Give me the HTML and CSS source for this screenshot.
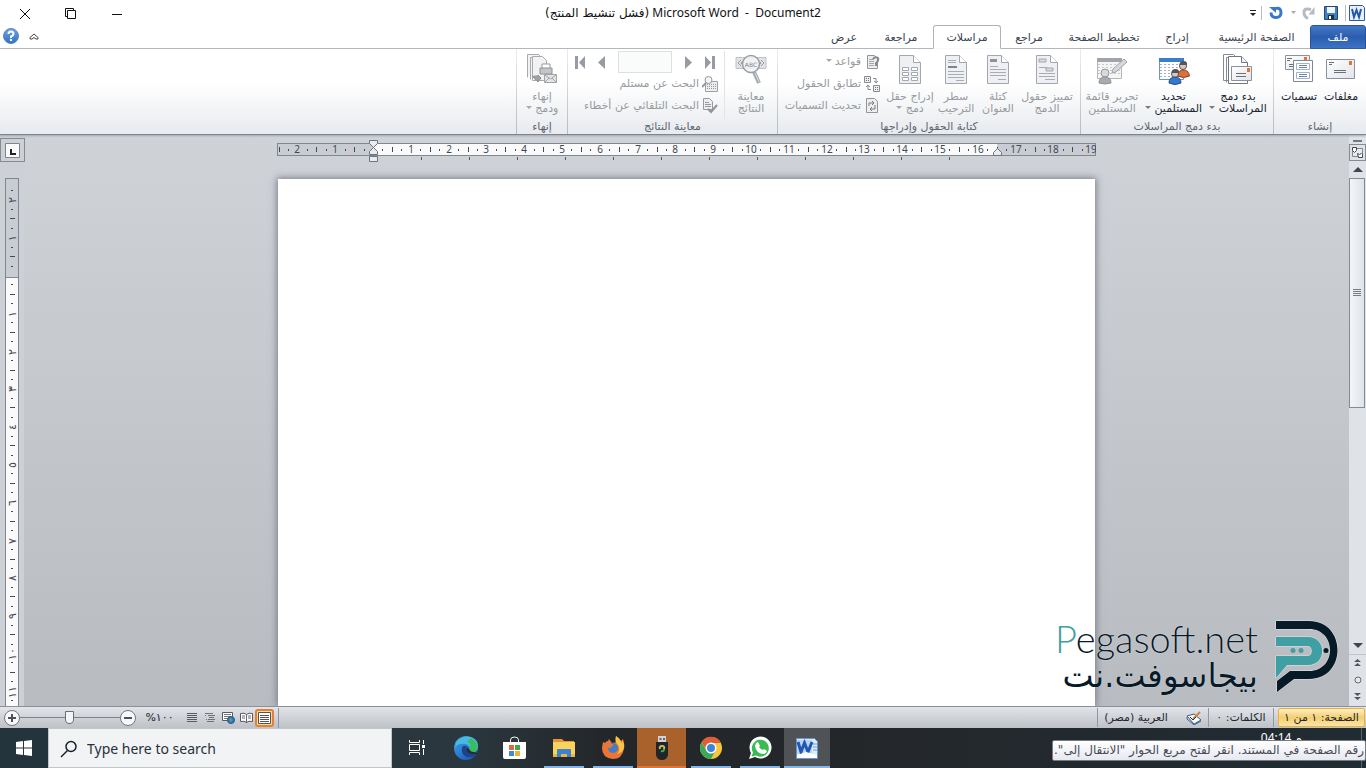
FILE: index.html
```html
<!DOCTYPE html>
<html lang="ar" dir="rtl">
<head>
<meta charset="utf-8">
<title>Microsoft Word - Document2</title>
<link rel="stylesheet" href="styles.css">
</head>
<body>
<svg class="defs" aria-hidden="true">
  <defs>
    <linearGradient id="paper" x1="0" y1="0" x2="1" y2="1"><stop offset="0" stop-color="#fff"/><stop offset="1" stop-color="#e2e4e9"/></linearGradient>
    <linearGradient id="edge" x1="0" y1="0" x2="1" y2="1"><stop offset="0" stop-color="#3aa5dc"/><stop offset=".5" stop-color="#2c7ad0"/><stop offset="1" stop-color="#1c479b"/></linearGradient>
    <linearGradient id="helpball" x1="0" y1="0" x2="0" y2="1"><stop offset="0" stop-color="#6aa6ea"/><stop offset="1" stop-color="#2c6fc4"/></linearGradient>
    <symbol id="doc" viewBox="0 0 24 32"><path d="M1.500 1.500h14l7 7v21h-21z" fill="#eff0f3" stroke="#a3a7ae"/><path d="M15.500 1.500v7h7" fill="#fff" stroke="#a3a7ae"/></symbol>
  </defs>
</svg>

<header class="titlebar" dir="ltr">
  <div class="window-buttons">
    <button aria-label="إغلاق"><svg width="12" height="12"><path d="M1 1l10 10M11 1L1 11" stroke="#111" fill="none"/></svg></button>
    <button aria-label="استعادة"><svg width="12" height="12"><path d="M.5 8.500v-8h8v2M2.500 2.500h8v8h-8zM.5 8.500h2" stroke="#111" fill="none"/></svg></button>
    <button aria-label="تصغير"><svg width="12" height="12"><path d="M1 6.500h10" stroke="#111"/></svg></button>
  </div>
  <h1 class="title"><bdi dir="rtl">(فشل تنشيط المنتج)</bdi> Microsoft Word&nbsp; -&nbsp; Document2</h1>
  <div class="quick-access">
    <button class="qa-more" aria-label="تخصيص"><svg width="8" height="8"><path d="M1 1.500h6" stroke="#222"/><path d="M1 4h6l-3 3z" fill="#222"/></svg></button>
    <button class="qa-undo" aria-label="تراجع"><svg width="14" height="14"><path d="M7 2.500q5-1 5 4 0 5-5 5-5 0-5-5" fill="none" stroke="#3778cc" stroke-width="3"/><path d="M0 1h7v6z" fill="#3778cc"/></svg></button>
    <button class="qa-drop" aria-label="خيارات"><svg width="6" height="4"><path d="M0 0h5l-2.500 3z" fill="#aaa"/></svg></button>
    <button class="qa-redo" aria-label="تكرار"><svg width="14" height="14"><path d="M9 3.500q-7-2-7 3 0 4 4 6" fill="none" stroke="#b6bac1" stroke-width="3"/><path d="M12.500 1v7.500h-6z" fill="#b6bac1"/></svg></button>
    <button class="qa-save" aria-label="حفظ"><svg width="14" height="14"><path d="M.5.5h13v13h-13z" fill="#3f7fc4" stroke="#24466f"/><path d="M3 1h8v6H3z" fill="#eef5fb"/><path d="M4 9h6v4.500H4z" fill="#1b2f49"/><path d="M5 10h2v3H5z" fill="#fff"/></svg></button>
    <span class="word-logo"><svg width="16" height="16"><path d="M.5.5h13l2 2v13H.5z" fill="#e8f0fb" stroke="#2c5aa8"/><path d="M3 4l2 8 2.500-7L10 12l2-8" fill="none" stroke="#2257b0" stroke-width="2"/></svg></span>
  </div>
</header>

<nav class="tabs">
  <button class="tab file">ملف</button>
  <button class="tab">الصفحة الرئيسية</button>
  <button class="tab">إدراج</button>
  <button class="tab">تخطيط الصفحة</button>
  <button class="tab">مراجع</button>
  <button class="tab active">مراسلات</button>
  <button class="tab">مراجعة</button>
  <button class="tab">عرض</button>
  <span class="tab-tools">
    <button aria-label="تصغير الشريط"><svg width="10" height="7"><path d="M1 4.500L5 1l4 3.500v1.500H7L5 4.500 3 6H1z" fill="#fff" stroke="#444"/></svg></button>
    <button aria-label="تعليمات"><svg width="16" height="16"><circle cx="8" cy="8" r="7.500" fill="url(#helpball)" stroke="#5f83b4"/><path d="M5.500 6q0-2.500 2.500-2.500T10.500 6Q10.500 7.500 8 8.500v1.500" fill="none" stroke="#fff" stroke-width="2"/><circle cx="8" cy="12" r="1.200" fill="#fff"/></svg></button>
  </span>
</nav>

<section class="ribbon" aria-label="مراسلات">
  <div class="group create">
    <div class="group-body">
      <button class="big"><svg width="32" height="32"><path d="M1.500 5.500h28v19h-28z" fill="url(#paper)" stroke="#8a919c"/><path d="M24 7h3v4h-3z" fill="#e1733a"/><path d="M4 8.500h5M4 10.500h3M9 16.500h12M9 18.500h12" stroke="#68707e"/></svg><span>مغلفات</span></button>
      <button class="big"><svg width="32" height="32"><path d="M2.500 1.500h24v14h-24z" fill="url(#paper)" stroke="#8a919c"/><path d="M21 3h3v4h-3z" fill="#e1733a"/><path d="M4 4.500h5M4 6.500h3M6 10.500h4M6 12.500h4" stroke="#68707e"/><path d="M10.500 6.500h19v21h-19z" fill="#fff" stroke="#7d8795"/><path d="M13.500 9.500h13v6h-13zM13.500 18.500h13v6h-13z" fill="#fff" stroke="#9fb2cf"/><path d="M16 11.500h8M16 13.500h8M16 20.500h8M16 22.500h8" stroke="#6f84a8"/></svg><span>تسميات</span></button>
    </div>
    <h2>إنشاء</h2>
  </div>
  <div class="group start">
    <div class="group-body">
      <button class="big"><svg width="32" height="32"><path d="M1.500 26.500v-26h10l3 3M1.500 26.500h6M4.500 28.500v-25h14" fill="#fff" stroke="#858b95"/><path d="M6.500 29.500v-27h13l6 6v21z" fill="#fff" stroke="#70777f"/><path d="M19.500 2.500v6h6" fill="#eef" stroke="#70777f"/><path d="M9.500 12.500h20v14h-20z" fill="url(#paper)" stroke="#8a919c"/><path d="M25 14h3v4h-3z" fill="#e1733a"/><path d="M14 19.500h10M14 22.500h10" stroke="#68707e"/></svg><span>بدء دمج<br>المراسلات <i class="arrow"></i></span></button>
      <button class="big"><svg width="32" height="32"><path d="M1.500 4.500h24v21h-24z" fill="#fff" stroke="#6c94cc"/><path d="M1 4h25v4H1z" fill="#3d7dcf"/><path d="M2 10.500h23M2 13.500h23M2 16.500h23M2 19.500h23M2 22.500h23" stroke="#a6b2c2" stroke-dasharray="2 2"/><circle cx="25" cy="12" r="3.500" fill="#d8c9bd" stroke="#555"/><path d="M21.500 11q0-4 4-4t3.500 4z" fill="#555"/><path d="M19.500 22q1-6 6-6t6 6q-6 3-12 0z" fill="#d9703f" stroke="#953c17"/><circle cx="17" cy="20" r="3.500" fill="#d8c9bd" stroke="#555"/><path d="M13.500 19q0-4 4-4t3.500 4z" fill="#555"/><path d="M11 29q0-6 6-6t6 6q-6 3-12 0z" fill="#3678ce" stroke="#204e92"/></svg><span>تحديد<br>المستلمين <i class="arrow"></i></span></button>
      <button class="big" disabled><svg width="32" height="32"><path d="M1.500 4.500h24v20h-24z" fill="#f5f5f6" stroke="#b4b6ba"/><path d="M1 4h25v4H1z" fill="#a1a4a9"/><path d="M2 10.500h23M2 13.500h23M2 16.500h23M2 19.500h23" stroke="#c6c8cc" stroke-dasharray="2 2"/><path d="M16 19l1-4L28 5l3 3-11 10z" fill="#d5d7da" stroke="#a0a3a8"/><circle cx="9" cy="19" r="4" fill="#d8d9db" stroke="#94979c"/><path d="M3 29q0-6 6-6t6 6q-6 2-12 0z" fill="#a8abb0" stroke="#8c8f94"/></svg><span>تحرير قائمة<br>المستلمين</span></button>
    </div>
    <h2>بدء دمج المراسلات</h2>
  </div>
  <div class="group fields">
    <div class="group-body">
      <button class="big" disabled><svg width="32" height="32"><use href="#doc" x="4" y="0" width="24" height="32"/><path d="M8 5h7v3H8z" fill="#d8dade" stroke="#a3a7ae"/><path d="M8 13.500h8M8 19.500h16M8 22.500h16M14 25.500h10" stroke="#a9acb2"/><path d="M15 14h7v3h-7z" fill="#d8dade" stroke="#a3a7ae"/></svg><span>تمييز حقول<br>الدمج</span></button>
      <button class="big" disabled><svg width="32" height="32"><use href="#doc" x="4" y="0" width="24" height="32"/><path d="M8 5h7v3H8z" fill="#8e9299"/><path d="M8 12.500h8M8 15.500h16M8 18.500h16M8 21.500h16M16 25.500h8" stroke="#a9acb2"/></svg><span>كتلة<br>العنوان</span></button>
      <button class="big" disabled><svg width="32" height="32"><use href="#doc" x="4" y="0" width="24" height="32"/><path d="M8 6.500h8M8 8.500h8M8 17.500h16M8 20.500h16M8 23.500h16M16 26.500h8" stroke="#a9acb2"/><path d="M8 12h9v2H8z" fill="#7f838a"/></svg><span>سطر<br>الترحيب</span></button>
      <button class="big" disabled><svg width="32" height="32"><use href="#doc" x="4" y="0" width="24" height="32"/><path d="M8.500 13.500h6v3h-6zM17.500 13.500h6v3h-6zM8.500 18.500h6v3h-6zM17.500 18.500h6v3h-6zM8.500 23.500h6v3h-6zM17.500 23.500h6v3h-6z" fill="#fff" stroke="#a3a7ae"/></svg><span>إدراج حقل<br>دمج <i class="arrow"></i></span></button>
      <div class="small-list">
        <button disabled><svg width="16" height="16"><path d="M3.500 1.500h7l3 3v10h-10z" fill="#eee" stroke="#92969c"/><path d="M5 5.500h5M5 7.500h5M5 9.500h5M5 11.500h5" stroke="#a3a7ad"/><path d="M9 5q2-3 5-1 1 3-2 5v3" fill="none" stroke="#868a90" stroke-width="2"/></svg>قواعد <i class="arrow"></i></button>
        <button disabled><svg width="16" height="16"><path d="M.5.5h6v6h-6zM9.500 9.500h6v6h-6z" fill="#eee" stroke="#888c92"/><path d="M2 2.500h3M2 4.500h3M11 11.500h3M11 13.500h3" stroke="#777" stroke-dasharray="1 1"/><path d="M9 2.500h3v4M10 5l2 2 2-2M7 13.500H4v-4M2 11l2-2 2 2" fill="none" stroke="#888c92"/></svg>تطابق الحقول</button>
        <button disabled><svg width="16" height="16"><path d="M2.500.5h8l3 3v11h-11z" fill="#eee" stroke="#92969c"/><path d="M5 8V5h5M8 3l2 2-2 2M11 7v4H6M8 9l-2 2 2 2" fill="none" stroke="#777c83"/></svg>تحديث التسميات</button>
      </div>
    </div>
    <h2>كتابة الحقول وإدراجها</h2>
  </div>
  <div class="group preview">
    <div class="group-body">
      <button class="big" disabled><svg width="32" height="32"><path d="M1 3.500h30v11H1z" fill="#e1e3e6" stroke="#bec1c5"/><path d="M6 6L3 9l3 3M9 6L6 9l3 3M26 6l3 3-3 3M23 6l3 3-3 3" fill="none" stroke="#999da3"/><circle cx="16" cy="10" r="8.500" fill="#f4f5f6" fill-opacity=".8" stroke="#9b9fa5" stroke-width="1.500"/><text x="16" y="13" class="abc">ABC</text><path d="M19 18l5 11" stroke="#a5a9af" stroke-width="4"/><path d="M20 19l4 9" stroke="#dcdee1"/></svg><span>معاينة<br>النتائج</span></button>
      <div class="preview-tools">
        <div class="record-nav">
          <button disabled aria-label="السجل الأخير"><svg width="10" height="13"><path d="M0 0l6 6.500L0 13zM7 0h3v13H7z" fill="#979ca4"/></svg></button>
          <button disabled aria-label="السجل التالي"><svg width="7" height="13"><path d="M0 0l7 6.500L0 13z" fill="#979ca4"/></svg></button>
          <input type="text" disabled aria-label="السجل">
          <button disabled aria-label="السجل السابق"><svg width="7" height="13"><path d="M7 0L0 6.500 7 13z" fill="#979ca4"/></svg></button>
          <button disabled aria-label="السجل الأول"><svg width="10" height="13"><path d="M10 0L4 6.500 10 13zM0 0h3v13H0z" fill="#979ca4"/></svg></button>
        </div>
        <div class="small-list">
          <button disabled><svg width="16" height="16"><path d="M3.500 5.500h12v10h-12z" fill="#eee" stroke="#a0a3a8"/><path d="M5 8.500h9M5 10.500h9M5 12.500h9" stroke="#96999e" stroke-dasharray="1 1"/><path d="M4 7L0 11" stroke="#96999e" stroke-width="2"/><circle cx="6.500" cy="4" r="3.500" fill="#f5f5f5" stroke="#96999e"/></svg>البحث عن مستلم</button>
          <button disabled><svg width="16" height="16"><path d="M1.500.5h6l3 3v8h-9z" fill="#eee" stroke="#96999e"/><path d="M3 4.500h4M3 6.500h6M3 8.500h6" stroke="#96999e"/><path d="M6 11l3 3 6-7" fill="none" stroke="#8f9298" stroke-width="2"/></svg>البحث التلقائي عن أخطاء</button>
        </div>
      </div>
    </div>
    <h2>معاينة النتائج</h2>
  </div>
  <div class="group finish">
    <div class="group-body">
      <button class="big" disabled><svg width="32" height="32"><path d="M1.500 23.500v-23h11l2 2M4.500 25.500v-22h13" fill="#f2f2f3" stroke="#a8abb0"/><path d="M6.500 26.500v-24h10l4 4v20z" fill="#f2f2f3" stroke="#a8abb0"/><path d="M16 10h8v5h-8z" fill="#fff" stroke="#96999e"/><path d="M14 14h12v6H14z" fill="#c3c5c9" stroke="#8f9298"/><path d="M6 22l6 6 3-4-3-3" fill="#9da0a5" stroke="#8c8f94"/><path d="M18.500 20.500h12v8h-12z" fill="#e4e5e7" stroke="#a0a3a8"/><path d="M19 21l5.500 4 5.500-4M19 28l4-4M30 28l-4-4" fill="none" stroke="#a0a3a8"/></svg><span>إنهاء<br>ودمج <i class="arrow"></i></span></button>
    </div>
    <h2>إنهاء</h2>
  </div>
</section>

<section class="workspace" dir="ltr">
  <aside class="left-rail">
    <button class="tab-stop" aria-label="علامة جدولة"><svg width="15" height="15"><path d="M.5.5h14v14H.5z" fill="#fafafa" stroke="#7d8590"/><path d="M6 6v5h5" fill="none" stroke="#222" stroke-width="2"/></svg></button>
    <svg class="v-ruler" id="v-ruler" width="14"></svg>
  </aside>
  <div class="canvas">
    <svg class="h-ruler" id="h-ruler" width="819" height="22"></svg>
    <main class="page" contenteditable="true" aria-label="المستند"></main>
  </div>
  <aside class="scrollbar">
    <span class="splitter"></span>
    <button class="ruler-toggle" aria-label="المسطرة"><svg width="13" height="13"><path d="M1.500 2.500h10v8h-10z" fill="#e9ecef" stroke="#7d8590"/><path d="M1.500 1.500h4v3l-2 2-2-2zM6.500 7.500l2 1 2-1 1 1v3h-4z" fill="#fff" stroke="#444"/></svg></button>
    <button class="step" aria-label="أعلى"><svg width="10" height="6"><path d="M5 0l5 5H0z" fill="#41454b"/></svg></button>
    <div class="track"><div class="thumb"><svg width="8" height="8"><path d="M0 .5h8M0 2.500h8M0 4.500h8M0 6.500h8" stroke="#777d85"/></svg></div></div>
    <button class="step" aria-label="أسفل"><svg width="10" height="6"><path d="M0 0h10L5 5z" fill="#41454b"/></svg></button>
    <div class="browse">
      <button aria-label="السابق"><svg width="7" height="8"><path d="M3.500 0L7 3H0zM3.500 4L7 7H0z" fill="#51565d"/></svg></button>
      <button aria-label="تحديد كائن الاستعراض"><svg width="8" height="8"><circle cx="4" cy="4" r="3" fill="#e6e8ea" stroke="#666b72"/></svg></button>
      <button aria-label="التالي"><svg width="7" height="8"><path d="M0 0h7L3.500 3zM0 4h7L3.500 7z" fill="#51565d"/></svg></button>
    </div>
  </aside>
  <div class="watermark">
    <div class="wm-text"><span class="wm-latin"><b>P</b>egasoft.net</span><span class="wm-arabic" dir="rtl">بيجاسوفت.نت</span></div>
    <svg width="64" height="74" viewBox="0 0 64 74"><g stroke="#fff" stroke-opacity=".6" paint-order="stroke"><path d="M1 1h33c38 0 38 58 0 58H19L2 72V61l13-10h19c28 0 28-42 0-42H1z" fill="#061a28"/><path d="M1 17h32c19 0 19 28 0 28H12L1 58V36h32c5 0 5-10 0-10H1z" fill="#3f9fa2"/></g><circle cx="18" cy="30.500" r="2.500" fill="#3f9fa2"/><circle cx="26" cy="30.500" r="2.500" fill="#3f9fa2"/><circle cx="51" cy="30.500" r="2.500" fill="#061a28"/></svg>
  </div>
</section>

<footer class="statusbar" dir="ltr">
  <div class="zoom">
    <button aria-label="تكبير"><svg width="16" height="16"><circle cx="8" cy="8" r="7.500" fill="#f8f8f8" stroke="#73777e"/><path d="M4 8h8M8 4v8" stroke="#4d5157" stroke-width="2"/></svg></button>
    <input type="range" min="0" max="100" value="49" aria-label="تكبير/تصغير">
    <button aria-label="تصغير"><svg width="16" height="16"><circle cx="8" cy="8" r="7.500" fill="#f8f8f8" stroke="#73777e"/><path d="M4 8h8" stroke="#4d5157" stroke-width="2"/></svg></button>
    <button class="zoom-value">%١٠٠</button>
  </div>
  <div class="views">
    <button aria-label="مسودة"><svg width="12" height="12"><path d="M1 1.500h10M1 3.500h10M1 5.500h10M1 7.500h10M1 9.500h10" stroke="#585d65"/></svg></button>
    <button aria-label="مخطط تفصيلي"><svg width="12" height="12"><path d="M1 1.500h8M4 3.500h7M5 5.500h5M4 7.500h7M3 9.500h7M1 3.500h1M2 7.500h1" stroke="#6d7279"/></svg></button>
    <button aria-label="تخطيط ويب"><svg width="13" height="12"><path d="M.5.500h10v8H.5z" fill="#fff" stroke="#555a61"/><path d="M2 2.500h7M2 4.500h7M2 6.500h4" stroke="#777"/><circle cx="9" cy="8" r="3.500" fill="#3678c0" stroke="#26557f"/><path d="M7 7l2-1 1 2-1 2z" fill="#62ac55"/></svg></button>
    <button aria-label="القراءة"><svg width="13" height="12"><path d="M.5 1.500q4-1 6 1 2-2 6-1v8q-4-1-6 1-2-2-6-1z" fill="#fff" stroke="#555a61"/><path d="M6.500 2v9M2 4h3M2 6h3M8 4h3M8 6h3" stroke="#666b72"/></svg></button>
    <button class="on" aria-label="تخطيط الطباعة"><svg width="13" height="12"><path d="M.5.5h12v11H.5z" fill="#fff" stroke="#4f545b"/><path d="M2 3.500h9M2 5.500h9M2 7.500h9M2 9.500h9" stroke="#555"/></svg></button>
  </div>
  <div class="status-info" dir="rtl">
    <button class="status-page">الصفحة: ١ من ١</button>
    <button class="status-words">الكلمات: ٠</button>
    <button class="status-lang"><svg width="16" height="14"><path d="M1 5l7-2 7 6-7 4z" fill="#f7f9fb" stroke="#3f5b83"/><path d="M1 6v2l7 6 7-4" fill="none" stroke="#3467a8"/><path d="M7 8l7-7" fill="none" stroke="#c9834b" stroke-width="2"/><path d="M4 6l3 3 3-3" fill="none" stroke="#333"/></svg>العربية (مصر)</button>
  </div>
</footer>

<footer class="taskbar" dir="ltr">
  <button class="start-button" aria-label="Start"><svg width="16" height="16"><path d="M0 2l7-1v6.500H0zM8 1l8-1v7.500H8zM0 8.500h7V15l-7-1zM8 8.500h8V16l-8-1z" fill="#fff"/></svg></button>
  <label class="search"><svg width="18" height="18"><circle cx="11" cy="6.500" r="5" fill="none" stroke="#16202a" stroke-width="1.500"/><path d="M7.500 10.500L1 17" stroke="#16202a" stroke-width="1.500"/></svg><input type="text" placeholder="Type here to search" aria-label="Type here to search"></label>
  <div class="apps">
    <button aria-label="Task View"><svg width="18" height="18"><path d="M1.500 1v2.500h10V1M1.500 16v-2.500h10V16M1.500 5.500h10v6h-10zM15.500 1v4M15.500 10v6" fill="none" stroke="#fff"/><path d="M14 6h3v3h-3z" fill="#fff"/></svg></button>
    <button aria-label="Edge"><svg width="24" height="24"><circle cx="12" cy="12" r="12" fill="url(#edge)"/><path d="M2 6C8-3 25-1 24 11c0 5-7 7-9 4 3-5-3-8-8-7-3 0-5 2-6 4z" fill="#49b9e3"/><path d="M17 2c8 4 9 14 2 14-3 0-5-1-4-3 3-3 1-6-2-7z" fill="#39bd61"/><path d="M9 10c-3 5 0 12 7 11 3 0 5-1 7-4-5 2-11 1-11-4 0-2 1-3 1-3z" fill="#1b438e"/><path d="M13 11c-2 3 0 7 5 7h6c-2-3-7-1-8-4z" fill="#242d33"/></svg></button>
    <button aria-label="Microsoft Store"><svg width="24" height="24"><path d="M0 6h23v15q0 2-2 2H2q-2 0-2-2z" fill="#fff"/><path d="M7.500 7V4q0-3 4-3t4 3v3" fill="none" stroke="#fff"/><path d="M6 9h5v5H6z" fill="#df6a36"/><path d="M12 9h5v5h-5z" fill="#42a556"/><path d="M6 15h5v5H6z" fill="#3f8ad5"/><path d="M12 15h5v5h-5z" fill="#e7b436"/></svg></button>
    <button class="running" aria-label="File Explorer"><svg width="24" height="24"><path d="M1 3h9l2 2h10v5H1z" fill="#e59735"/><path d="M1 6h22v15H1z" fill="#fbd35c"/><path d="M1 18h22v3H1z" fill="#efb742"/><path d="M5 21v-7q0-1 1-1h12q1 0 1 1v7h-4v-3H9v3z" fill="#3b83cf"/></svg></button>
    <button class="running" aria-label="Firefox"><svg width="24" height="24"><path d="M2 6l2 1q1-2 3-2l1-2 3 4 5-1-1-6q4 2 5 5l2-2q2 6 1 10-2 10-11 10Q1 22 1 12z" fill="#ec7434"/><path d="M15 0q-2 5 2 9 3 5-1 9 8-2 7-10l-2-4v3q-3-5-6-7z" fill="#f6c543"/><circle cx="12" cy="12" r="5" fill="#437cc7"/><path d="M5 8q4-2 8 1-3 1-3 3-3-1-5 1z" fill="#dc7a41"/></svg></button>
    <button class="running usb" aria-label="USB"><svg width="14" height="24"><path d="M3 0h8v7H3z" fill="#d1d3d6"/><path d="M4.500 2h2v2h-2zM8 2h2v2H8z" fill="#66696d"/><path d="M1 6h12v13q-1 5-6 5t-6-5z" fill="#20252a"/><path d="M5 13q-1-3 2-3 3 0 2 3" fill="none" stroke="#c9bd45" stroke-width="2"/><path d="M9 13q0 3-3 2" fill="none" stroke="#45a850" stroke-width="2"/></svg></button>
    <button class="running" aria-label="Chrome"><svg width="24" height="24"><circle cx="12" cy="12" r="11" fill="#f5c740"/><path d="M2.500 6.500A11 11 0 0 1 22 7H12L8 14z" fill="#df5d38"/><path d="M2.500 6.500A11 11 0 0 0 12 23l4-8H8z" fill="#3aa85a"/><circle cx="12" cy="12" r="5.500" fill="#fff"/><circle cx="12" cy="12" r="4" fill="#3f83da"/></svg></button>
    <button class="running" aria-label="WhatsApp"><svg width="24" height="24"><path d="M1 23l2-6A11 11 0 1 1 7 21z" fill="#fff"/><path d="M3.500 20.500l1.500-4a8.500 8.500 0 1 1 3 3z" fill="#3cbb54"/><path d="M8 7l2-1 2 4-1 1q1 2 4 3l1-1 3 2q-1 3-4 3-7-1-8-8z" fill="#fff"/></svg></button>
    <button class="running current" aria-label="Word"><svg width="24" height="24"><path d="M1.500 2.500h18l3 3v17h-21z" fill="#dcebfb" stroke="#6696ce"/><path d="M2 4h15v14H2z" fill="#b9d4f2"/><path d="M3 6l3 10L9.500 7l3.500 9 4-10" fill="none" stroke="#2157ae" stroke-width="3"/><path d="M18 8h4M18 11h4M18 14h4" stroke="#6f9ed4"/><path d="M2 19l9-3 11 3v3H2z" fill="#fff"/></svg></button>
  </div>
  <div class="tray"><time class="clock">04:14 م</time></div>
  <div class="tooltip" role="tooltip" dir="rtl">رقم الصفحة في المستند. انقر لفتح مربع الحوار "الانتقال إلى".</div>
</footer>
<script src="script.js"></script>
</body>
</html>
```
FILE: styles.css
```css
* { box-sizing: border-box; }
html, body { height: 100%; margin: 0; }
body {
  display: flex;
  flex-direction: column;
  overflow: hidden;
  background: #fff;
  color: #1d2733;
  font-family: "DejaVu Sans", sans-serif;
  font-size: 11px;
  line-height: 12px;
}
button, input { font: inherit; color: inherit; }
button { margin: 0; padding: 0; border: 0; background: none; }
svg { display: block; flex: none; }
.defs { position: absolute; width: 0; height: 0; }

/* Title bar */
.titlebar { display: grid; grid-template-columns: 1fr auto 1fr; align-items: center; height: 25px; }
.window-buttons { display: flex; padding-left: 2px; padding-top: 3px; }
.window-buttons button { display: flex; justify-content: center; width: 46px; }
.title { margin: 0; padding-top: 1px; font: 400 12px/16px "Noto Sans", "DejaVu Sans", sans-serif; color: #111; }
.title bdi { font-family: "DejaVu Sans", sans-serif; }
.quick-access { display: flex; justify-content: flex-end; align-items: center; height: 24px; padding-right: 1px; }
.qa-undo { margin-left: 4px; padding-left: 7px; border-left: 1px solid #bbb; }
.qa-drop { margin-left: 8px; }
.qa-redo { margin-left: 5px; }
.qa-save { margin-left: 8px; }
.word-logo { margin-left: 7px; padding-left: 3px; border-left: 1px solid #bbb; }

/* Ribbon tabs */
.tabs {
  display: grid;
  grid-template-columns: 56px 107px 52px 94px 56px 68px 64px 50px 1fr;
  height: 24px;
  border-bottom: 1px solid #b4b8be;
}
.tab { height: 24px; padding-top: 1px; color: #3b4450; white-space: nowrap; }
.tab.file { background: linear-gradient(#4478c6, #2b5dae 50%, #3d73c4); border: 1px solid #2a539c; border-radius: 3px 3px 0 0; color: #fff; }
.tab.active { background: #fff; border: 1px solid #aeb3ba; border-bottom-color: #fff; border-radius: 3px 3px 0 0; }
.tab-tools { display: flex; justify-content: flex-end; align-items: center; gap: 10px; padding: 0 0 2px 3px; }

/* Ribbon */
.ribbon { display: flex; height: 86px; background: linear-gradient(#fff 40%, #e7eaee); border-bottom: 1px solid #7e858e; box-shadow: 0 1px 2px #a4a8af; z-index: 1; }
.group { display: flex; flex-direction: column; border-left: 1px solid; border-image: linear-gradient(#eceef0, #b5bac1) 1; }
.group-body { display: grid; flex: 1; padding-top: 2px; }
.group h2 { margin: 0; height: 15px; font-size: 11px; font-weight: 400; line-height: 15px; text-align: center; color: #5e6670; }
.create { width: 93px; }
.create .group-body { grid-template-columns: 50px 34px; }
.start { width: 193px; }
.start .group-body { grid-template-columns: 70px 59px 64px; }
.fields { width: 303px; }
.fields .group-body { grid-template-columns: 66px 32px 52px 40px 113px; }
.preview { width: 210px; }
.preview .group-body { grid-template-columns: 52px 158px; }
.finish { width: 51px; }
.big { display: flex; flex-direction: column; align-items: center; justify-content: flex-start; gap: 5px; padding-top: 3px; white-space: nowrap; }
.big span { display: block; margin: 0 -10px; }
button:disabled { color: #979ba0; }
.arrow { display: inline-block; margin-bottom: 3px; border: 3px solid transparent; border-top-color: #777b80; border-bottom: 0; }
button:disabled .arrow { border-top-color: #a5a9ae; }
.small-list { display: flex; flex-direction: column; padding-right: 10px; }
.small-list button { display: flex; align-items: center; gap: 3px; height: 22px; white-space: nowrap; }
.preview-tools { border-right: 1px solid #e2e4e7; }
.preview-tools .small-list { padding-right: 6px; }
.record-nav { display: flex; justify-content: space-between; align-items: center; height: 22px; padding: 0 9px 0 8px; }
.record-nav input { width: 54px; height: 22px; border: 1px solid #dbe1e1; background: #fafcfb; }
.abc { font-size: 6px; text-anchor: middle; fill: #7e8288; direction: ltr; }

/* Workspace */
.workspace { position: relative; display: flex; flex: 1; min-height: 0; background: linear-gradient(#cfd2d7, #b8bbc0); }
.left-rail { display: flex; flex-direction: column; width: 24px; padding-top: 3px; background: #cdd0d5; }
.tab-stop { display: flex; align-items: center; justify-content: center; width: 25px; height: 24px; flex: none; border: 1px solid #858b95; }
.v-ruler { flex: 1; margin: 16px 0 0 5px; border: 1px solid #7f8791; border-bottom: 0; }
.canvas { display: flex; flex: 1; flex-direction: column; align-items: center; min-width: 0; overflow: hidden; padding-top: 5px; }
.h-ruler { margin-bottom: 17px; }
.page { flex: 1; width: 817px; max-width: 100%; background: #fff; box-shadow: 0 0 7px 1px #767b8b; outline: 0; }
.ruler-number { font-size: 10px; fill: #414854; text-anchor: middle; direction: ltr; font-family: "Noto Sans", "DejaVu Sans", sans-serif; }
.ruler-number.arabic { font-family: "DejaVu Sans", sans-serif; font-size: 11px; }

.scrollbar { display: flex; flex-direction: column; width: 17px; background: #dfe3e8; }
.scrollbar button { display: flex; align-items: center; justify-content: center; }
.splitter { height: 2px; margin: 5px 4px 2px; background: #747a82; }
.ruler-toggle { height: 17px; border: 1px solid #858b95; }
.step { height: 17px; }
.track { flex: 1; padding-right: 1px; }
.thumb { display: flex; align-items: center; justify-content: center; height: 50%; border: 1px solid #858b95; background: linear-gradient(90deg, #f4f5f7, #dfe3e8); }
.browse { display: grid; grid-template-rows: 16px 18px 16px; padding-bottom: 1px; border-top: 1px solid #c2c6cb; }

.watermark { position: absolute; right: 27px; bottom: 11px; display: flex; align-items: center; gap: 17px; }
.wm-text { display: flex; flex-direction: column; align-items: flex-end; color: #061a28; text-shadow: 0 0 1px #fff; }
.wm-latin { font: 300 38px/38px Lato, sans-serif; white-space: nowrap; }
.wm-latin b { font-weight: 300; color: #3f9fa2; }
.wm-arabic { font-size: 33px; line-height: 38px; white-space: nowrap; }

/* Status bar */
.statusbar { display: flex; align-items: center; height: 22px; border-top: 1px solid #8a919b; background: linear-gradient(#e3e5e9, #cfd2d7 50%, #bec1c6); }
.zoom { display: flex; align-items: center; padding-left: 4px; }
.zoom input { width: 100px; height: 16px; margin: 0; appearance: none; background: linear-gradient(#7e838b, #7e838b) center / 100% 1px no-repeat; }
.zoom input::-webkit-slider-thumb { appearance: none; width: 9px; height: 13px; border: 1px solid #6a6f77; border-radius: 1px 1px 5px 5px; background: #f4f5f6; }
.zoom-value { width: 47px; }
.views { display: flex; align-items: center; height: 20px; border-right: 1px solid #9298a1; padding-right: 4px; }
.views button { display: flex; align-items: center; justify-content: center; width: 18px; height: 18px; }
.views .on { width: 19px; background: #ffd98a; border: 2px solid #e0803e; border-radius: 3px; }
.status-info { display: flex; align-items: center; flex: 1; height: 21px; }
.status-info button { display: flex; align-items: center; justify-content: center; height: 19px; white-space: nowrap; }
.status-info .status-page { width: 87px; margin: 0 1px 0 4px; border: 1px solid #e9b23d; border-radius: 2px; background: linear-gradient(#fdf0c4, #f4ce71 50%, #fbe5a3); }
.status-words { width: 66px; border: 1px solid #9298a1; border-width: 0 1px; }
.status-lang { width: 111px; gap: 18px; border-left: 1px solid #9298a1; }

/* Taskbar */
.taskbar { position: relative; display: flex; height: 40px; background: linear-gradient(90deg, #24343d, #2a373e 34%, #24272a 44%, #24272a 62%, #202c33); }
.start-button { display: flex; align-items: center; justify-content: center; width: 48px; }
.search { display: flex; align-items: center; gap: 8px; width: 344px; padding: 1px 11px 0; background: #f2f3f4; border: 1px solid #c2c5c8; }
.search input { flex: 1; min-width: 0; padding: 1px 0 0 1px; border: 0; background: none; font: 400 14px/20px "Noto Sans", sans-serif; }
.search input::placeholder { color: #27313a; opacity: 1; }
.apps { display: flex; }
.apps button { display: flex; align-items: center; justify-content: center; width: 49px; padding-top: 2px; border: solid transparent; border-width: 0 0 2px; }
.apps .running { background: linear-gradient(#82b6e9, #82b6e9) center bottom / 40px 2px no-repeat border-box; }
.apps .usb { background: #a9622b; border-bottom-color: #df7439; }
.apps .current { width: 46px; background: #505356; border-bottom-color: #82b6e9; }
.tray { display: flex; flex: 1; justify-content: flex-end; padding: 2px 59px 0 0; border-right: 1px solid #59636a; margin-right: 4px; }
.clock { font: 400 12px/16px "Noto Sans", "DejaVu Sans", sans-serif; color: #fff; }
.tooltip { position: absolute; right: 0; top: 12px; padding: 2px 1px; border: 1px solid #767b82; border-radius: 2px; background: linear-gradient(#fff, #e7e8f1); color: #474c55; font-size: 12px; line-height: 15px; white-space: nowrap; }
```
FILE: script.js
```js
const NS = "http://www.w3.org/2000/svg";
const CM = 37.8;

function add(parent, name, attrs, text) {
  const el = document.createElementNS(NS, name);
  for (const key in attrs) el.setAttribute(key, attrs[key]);
  if (text !== undefined) el.textContent = text;
  parent.appendChild(el);
}

function drawHorizontal() {
  const svg = document.getElementById("h-ruler");
  const zero = 96, end = 720;
  add(svg, "rect", { x: 0.5, y: 3.5, width: 818, height: 12, fill: "#c9ccd2", stroke: "#7f8791" });
  add(svg, "rect", { x: zero, y: 4, width: end - zero, height: 11, fill: "#fafafa" });
  for (let q = -10; q < 77; q++) {
    const x = Math.round(zero + q * CM / 4);
    if (q % 4 === 0) {
      if (q && x < 818) add(svg, "text", { x, y: 13, class: "ruler-number" }, Math.abs(q / 4));
    } else {
      const half = q % 2 === 0;
      add(svg, "rect", { x, y: half ? 7 : 9, width: 1, height: half ? 5 : 2, fill: "#444a53" });
    }
  }
  for (let x = zero + 48; x < end - 10; x += 48) {
    add(svg, "rect", { x, y: 17, width: 1, height: 3, fill: "#555b64" });
  }
  add(svg, "path", { d: "M92.5 .5h8v3l-4 4 4 4v3h-8v-3l4-4-4-4zM92.5 16.500h8v5h-8z", fill: "#e9ebee", stroke: "#6e747d" });
  add(svg, "path", { d: "M720.5 8.500l4 4v3h-8v-3z", fill: "#e9ebee", stroke: "#6e747d" });
}

function drawVertical() {
  const svg = document.getElementById("v-ruler");
  const zero = 98, height = svg.clientHeight;
  add(svg, "rect", { x: 0, y: 0, width: 12, height: zero, fill: "#c9ccd2" });
  add(svg, "rect", { x: 0, y: zero, width: 12, height: 2000, fill: "#fafafa" });
  add(svg, "rect", { x: 0, y: zero, width: 12, height: 1, fill: "#7f8791" });
  for (let q = -9; zero + q * CM / 4 < height; q++) {
    if (q === 0) continue;
    const y = Math.round(zero - 2 + q * CM / 4);
    if (q % 4 === 0) {
      const label = Math.abs(q / 4).toLocaleString("ar-EG");
      add(svg, "text", { x: 0, y: 0, transform: `translate(10 ${y + 1}) rotate(-90)`, class: "ruler-number arabic" }, label);
    } else {
      const half = q % 2 === 0;
      add(svg, "rect", { x: half ? 4 : 5, y, width: half ? 5 : 2, height: 1, fill: "#444a53" });
    }
  }
}

drawHorizontal();
drawVertical();
```
